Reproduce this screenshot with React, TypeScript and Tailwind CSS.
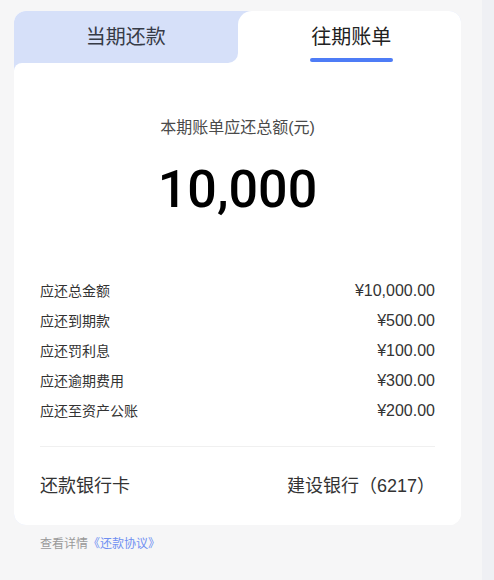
import React from "react";

const font = {
  fontFamily: '"Liberation Sans", "Noto Sans CJK SC", sans-serif',
};

const rows: { label: string; value: string }[] = [
  { label: "应还总金额", value: "¥10,000.00" },
  { label: "应还到期款", value: "¥500.00" },
  { label: "应还罚利息", value: "¥100.00" },
  { label: "应还逾期费用", value: "¥300.00" },
  { label: "应还至资产公账", value: "¥200.00" },
];

export default function App() {
  return (
    <div className="flex h-[580px] w-full bg-[#f6f6f7]" style={font}>
      <div className="flex-1 pl-[14px] pt-[11px] pr-[21px]">
        <div className="w-[447px] overflow-hidden rounded-[12px] bg-white">
          {/* Tabs */}
          <div className="grid h-[52px] grid-cols-2">
            <div className="bg-white">
              <div className="flex h-full justify-center rounded-br-[10px] bg-[#d6e0f9] pt-[12px]">
                <span className="text-[20px] leading-[28px] text-[#363b47]">当期还款</span>
              </div>
            </div>
            <div className="bg-[#d6e0f9]">
              <div className="flex h-full flex-col items-center rounded-tl-[14px] bg-white pt-[12px]">
                <span className="pl-[4px] text-[20px] leading-[28px] text-[#222222]">往期账单</span>
                <div className="ml-[4px] mt-[7px] h-[4px] w-[83px] rounded-full bg-[#4e7cf6]" />
              </div>
            </div>
          </div>

          {/* Body */}
          <div className="bg-[linear-gradient(90deg,#d6e0f9_50%,#ffffff_50%)]">
            <div className="rounded-tl-[8px] bg-white px-[26px] pb-[27px] pt-[54px]">
              <div className="text-center text-[16px] leading-[22px] text-[#4a4a4a]">
                本期账单应还总额(元)
              </div>
              <div
                className="mt-[25px] text-center text-[52px] font-medium leading-[52px] text-black"
                style={{ fontFamily: 'Roboto, "Liberation Sans", sans-serif' }}
              >
                10,000
              </div>

              <div className="mt-[60px] flex flex-col">
                {rows.map((r) => (
                  <div key={r.label} className="flex h-[30px] items-center justify-between">
                    <span className="text-[14px] text-[#333333]">{r.label}</span>
                    <span className="text-[16px] text-[#333333]">{r.value}</span>
                  </div>
                ))}
              </div>

              <div className="mt-[20px] h-px bg-[#f0f0f0]" />

              <div className="mt-[27px] flex items-center justify-between text-[18px] leading-[24px] text-[#333333]">
                <span>还款银行卡</span>
                <span>建设银行（6217）</span>
              </div>
            </div>
          </div>
        </div>

        <div className="mt-[10px] pl-[26px] text-[12px] leading-[18px]">
          <span className="text-[#999999]">查看详情</span>
          <span className="text-[#6f8ff2]">《还款协议》</span>
        </div>
      </div>
      <div className="w-[12px] bg-[#eff0f4]" />
    </div>
  );
}
